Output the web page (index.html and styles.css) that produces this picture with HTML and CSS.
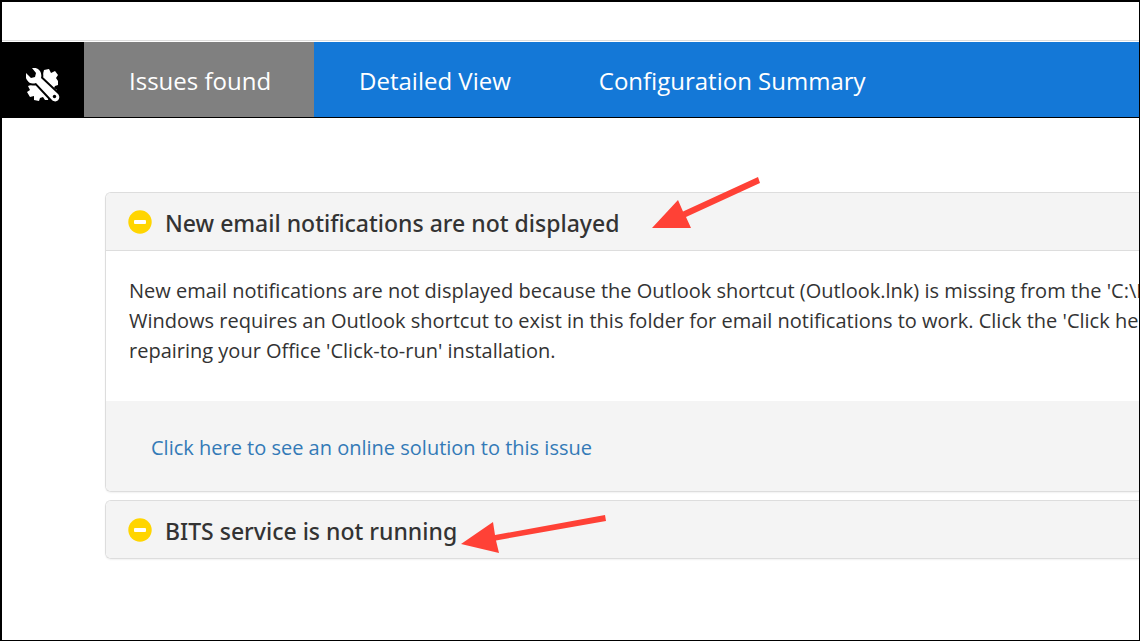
FILE: index.html
```html
<!DOCTYPE html>
<html lang="en">
    <head>
        <meta charset="utf-8">
        <title>Issues found</title>
        <link rel="stylesheet" href="styles.css">
    </head>

    <body>
    <div class="window">
        <header class="topbar"></header>

        <nav class="navbar">
            <a class="brand" href="#" aria-label="Home">
                <svg width="34" height="34" viewBox="0 0 34 34">
                    <path d="M14 10l3-4 1-4 5-1 2 4 4-2 3 4-2 3 2 3v4l-3 1-1 2 3 2v3l-3 1zM2 18l6-2 4-1 13 13-2 1-1 3h-3l-2-3-3 1-1 3-5-1v-4l-4 1-3-5 3-2z" fill="#fff"/>
                    <path d="M6 0q5-1 8 3 2 3 1 7l17 16c4 5-2 10-6 6L10 15Q4 17 1 12-1 9 0 5l5 5 4-1 1-4z" fill="#fff" stroke="#000" stroke-width="4" paint-order="stroke"/>
                    <circle cx="28.500" cy="28.500" r="1.700" fill="#000"/>
                </svg>
            </a>
            <a class="tab active" href="#">Issues found</a>
            <a class="tab" href="#">Detailed View</a>
            <a class="tab" href="#">Configuration Summary</a>
        </nav>

        <main class="issues">
            <section class="panel">
                <h2 class="panel-heading">
                    <svg class="icon" width="24" height="24" viewBox="0 0 24 24">
                        <circle cx="12" cy="12" r="11.7" fill="#ffd500"/>
                        <rect x="6" y="10" width="12" height="4" rx="1" fill="#fff"/>
                    </svg>
                    <span>New email notifications are not displayed</span>
                </h2>
                <p class="panel-body">
                    New email notifications are not displayed because the Outlook shortcut (Outlook.lnk) is missing from the 'C:\P<br>
                    Windows requires an Outlook shortcut to exist in this folder for email notifications to work. Click the 'Click her<br>
                    repairing your Office 'Click-to-run' installation.
                </p>
                <div class="panel-footer">
                    <a href="#">Click here to see an online solution to this issue</a>
                </div>
            </section>

            <section class="panel">
                <h2 class="panel-heading">
                    <svg class="icon" width="24" height="24" viewBox="0 0 24 24">
                        <circle cx="12" cy="12" r="11.7" fill="#ffd500"/>
                        <rect x="6" y="10" width="12" height="4" rx="1" fill="#fff"/>
                    </svg>
                    <span>BITS service is not running</span>
                </h2>
            </section>
        </main>

        <!-- arrows pointing at the two headings -->
        <svg class="arrow arrow-email" width="110" height="54" viewBox="0 0 110 54">
            <path d="M0 52L26 24l5 11.500L106 1l2 6L34 41l5 11z"/>
        </svg>
        <svg class="arrow arrow-bits" width="146" height="40" viewBox="0 0 146 40">
            <path d="M0 30L32 8l2 13L144 1l1 6L35 26.500l3 12.500z"/>
        </svg>
    </div>
    </body>
</html>
```

FILE: styles.css
```css
body{
    margin: 0;
    font-family: "Open Sans", "Noto Sans", sans-serif;
    font-size: 20px;
    line-height: 30px;
    color: #333;
    background-color: white;
}

.window{
    position: relative;
    box-sizing: border-box;
    min-height: 100vh;
    border: 1px solid black;
    border-width: 2px 1px 1px 2px;
    overflow: hidden;
}

.topbar{
    height: 38px;
    margin-bottom: 1px;
    border-bottom: 1px solid #ddd;
}

.navbar{
    display: flex;
    background-color: #1478d7;
    border-bottom: 1px solid black;
}

.brand{
    display: flex;
    align-items: center;
    justify-content: center;
    width: 82px;
    padding-top: 10px;
    box-sizing: border-box;
    background-color: black;
}

.tab{
    padding: 23px 43px 20px 45px;
    font-size: 24px;
    line-height: 32px;
    color: white;
    text-decoration: none;
    white-space: nowrap;
}

.tab.active{
    background-color: #808080;
}

.issues{
    display: flex;
    flex-direction: column;
    gap: 8px;
    padding: 74px 0 60px 103px;
}

.panel{
    border: 1px solid #ddd;
    border-right: none;
    border-radius: 6px 0 0 6px;
    box-shadow: 0 1px 2px rgba(0, 0, 0, 0.06);
    overflow: hidden;
}

.panel-heading{
    display: flex;
    align-items: center;
    gap: 13px;
    margin: 0;
    padding: 15px 22px 12px;
    background-color: #f4f4f4;
    font-family: "Noto Sans", "Open Sans", sans-serif;
    font-size: 23px;
    font-weight: 500;
}

.icon{
    flex: none;
    margin-bottom: 3px;
}

.panel-body{
    margin: 0;
    padding: 25px 23px 35px;
    border-top: 1px solid #ddd;
    white-space: nowrap;
}

.panel-footer{
    padding: 32px 45px 28px;
    background-color: #f4f4f4;
}

.panel-footer a{
    color: #337ab7;
    text-decoration: none;
}

.arrow{
    position: absolute;
    fill: #ff4136;
}

.arrow-email{
    left: 650px;
    top: 174px;
}

.arrow-bits{
    left: 459px;
    top: 512px;
}
```
